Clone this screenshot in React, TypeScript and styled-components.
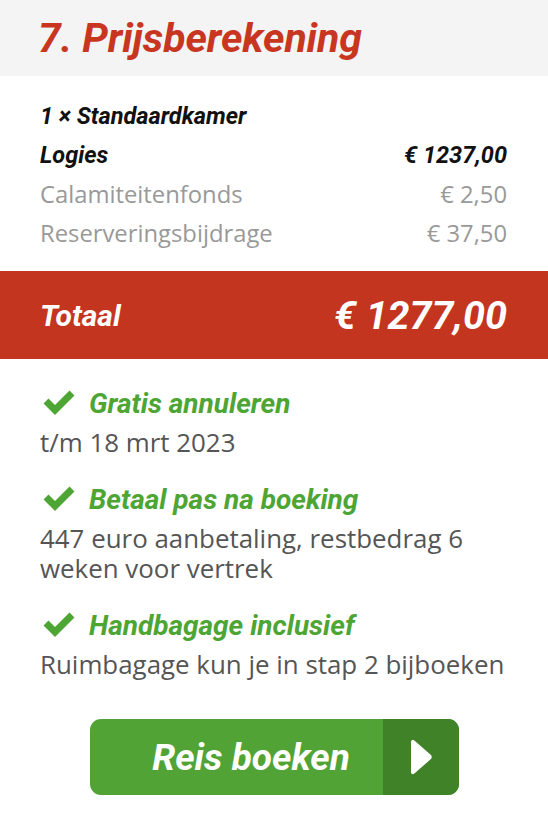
import React from "react";
import styled, { createGlobalStyle } from "styled-components";

const GlobalStyle = createGlobalStyle`
  html, body {
    margin: 0;
    padding: 0;
    background: #ffffff;
  }
  body {
    font-family: "Open Sans", "Liberation Sans", sans-serif;
    -webkit-font-smoothing: antialiased;
  }
  * { box-sizing: border-box; }
`;

const Page = styled.div`
  width: 548px;
  min-height: 832px;
  background: #ffffff;
  display: flex;
  flex-direction: column;
`;

const Header = styled.header`
  height: 76px;
  background: #f4f4f4;
  display: flex;
  align-items: center;
  padding: 0 38px;
`;

const Title = styled.h1`
  margin: 0;
  font-family: Roboto, "Liberation Sans", sans-serif;
  font-style: italic;
  font-weight: 700;
  font-size: 41px;
  line-height: 1;
  color: #c8361f;
  letter-spacing: -0.1px;
`;

const PriceList = styled.div`
  display: flex;
  flex-direction: column;
  padding: 20px 41px 19px 40px;
`;

const PriceRow = styled.div<{ $muted?: boolean }>`
  height: 39px;
  display: flex;
  align-items: center;
  justify-content: space-between;
  font-family: ${(p) =>
    p.$muted
      ? `"Open Sans", "Liberation Sans", sans-serif`
      : `Roboto, "Liberation Sans", sans-serif`};
  font-style: ${(p) => (p.$muted ? "normal" : "italic")};
  font-weight: ${(p) => (p.$muted ? 400 : 700)};
  font-size: ${(p) => (p.$muted ? "23.8px" : "23.5px")};
  color: ${(p) => (p.$muted ? "#999999" : "#111111")};
`;

const TotalBar = styled.div`
  height: 88px;
  background: #c4351f;
  display: flex;
  align-items: center;
  justify-content: space-between;
  padding: 0 41px 0 40px;
  color: #ffffff;
  font-family: Roboto, "Liberation Sans", sans-serif;
  font-style: italic;
  font-weight: 700;
`;

const TotalLabel = styled.span`
  font-size: 30px;
`;

const TotalAmount = styled.span`
  font-size: 39.5px;
`;

const Features = styled.div`
  display: flex;
  flex-direction: column;
  gap: 26px;
  padding: 28px 40px 0 40px;
`;

const Feature = styled.div`
  display: flex;
  flex-direction: column;
  gap: 8px;
`;

const FeatureHead = styled.div`
  display: flex;
  align-items: center;
  gap: 14px;
  height: 32px;
  padding-left: 3px;
`;

const FeatureTitle = styled.span`
  font-family: Roboto, "Liberation Sans", sans-serif;
  font-style: italic;
  font-weight: 700;
  font-size: 28px;
  color: #4da534;
`;

const FeatureText = styled.p`
  margin: 0;
  font-family: "Open Sans", "Liberation Sans", sans-serif;
  font-size: 25.9px;
  line-height: 30px;
  color: #555555;
`;

const ButtonWrap = styled.div`
  display: flex;
  justify-content: center;
  padding-top: 40px;
`;

const BookButton = styled.button`
  width: 369px;
  height: 76px;
  border: none;
  padding: 0;
  border-radius: 11px;
  overflow: hidden;
  display: flex;
  background: #52a336;
  cursor: pointer;
`;

const ButtonLabel = styled.span`
  flex: 1;
  display: flex;
  align-items: center;
  justify-content: center;
  padding-left: 30px;
  font-family: Roboto, "Liberation Sans", sans-serif;
  font-style: italic;
  font-weight: 700;
  font-size: 37px;
  color: #ffffff;
`;

const ButtonArrow = styled.span`
  width: 76px;
  display: flex;
  align-items: center;
  justify-content: center;
  background: #3f8228;
`;

const CheckIcon = () => (
  <svg width="32" height="26" viewBox="0 0 32 26" aria-hidden="true">
    <polyline
      points="3,11 12,20 29,3"
      fill="none"
      stroke="#4da534"
      strokeWidth="7"
      strokeLinecap="butt"
      strokeLinejoin="miter"
    />
  </svg>
);

const ArrowIcon = () => (
  <svg width="24" height="36" viewBox="0 0 24 36" aria-hidden="true">
    <path
      d="M3 3 Q3 1 5 2.5 L21 16.5 Q22.5 18 21 19.5 L5 33.5 Q3 35 3 33 Z"
      fill="#ffffff"
      stroke="#ffffff"
      strokeWidth="2"
      strokeLinejoin="round"
    />
  </svg>
);

const features = [
  { title: "Gratis annuleren", text: "t/m 18 mrt 2023" },
  {
    title: "Betaal pas na boeking",
    text: "447 euro aanbetaling, restbedrag 6 weken voor vertrek",
  },
  {
    title: "Handbagage inclusief",
    text: "Ruimbagage kun je in stap 2 bijboeken",
  },
];

export default function App() {
  return (
    <>
      <GlobalStyle />
      <Page>
        <Header>
          <Title>7. Prijsberekening</Title>
        </Header>
        <PriceList>
          <PriceRow>
            <span>1 × Standaardkamer</span>
          </PriceRow>
          <PriceRow>
            <span>Logies</span>
            <span>€ 1237,00</span>
          </PriceRow>
          <PriceRow $muted>
            <span>Calamiteitenfonds</span>
            <span>€ 2,50</span>
          </PriceRow>
          <PriceRow $muted>
            <span>Reserveringsbijdrage</span>
            <span>€ 37,50</span>
          </PriceRow>
        </PriceList>
        <TotalBar>
          <TotalLabel>Totaal</TotalLabel>
          <TotalAmount>€ 1277,00</TotalAmount>
        </TotalBar>
        <Features>
          {features.map((f) => (
            <Feature key={f.title}>
              <FeatureHead>
                <CheckIcon />
                <FeatureTitle>{f.title}</FeatureTitle>
              </FeatureHead>
              <FeatureText>{f.text}</FeatureText>
            </Feature>
          ))}
        </Features>
        <ButtonWrap>
          <BookButton type="button">
            <ButtonLabel>Reis boeken</ButtonLabel>
            <ButtonArrow>
              <ArrowIcon />
            </ButtonArrow>
          </BookButton>
        </ButtonWrap>
      </Page>
    </>
  );
}
